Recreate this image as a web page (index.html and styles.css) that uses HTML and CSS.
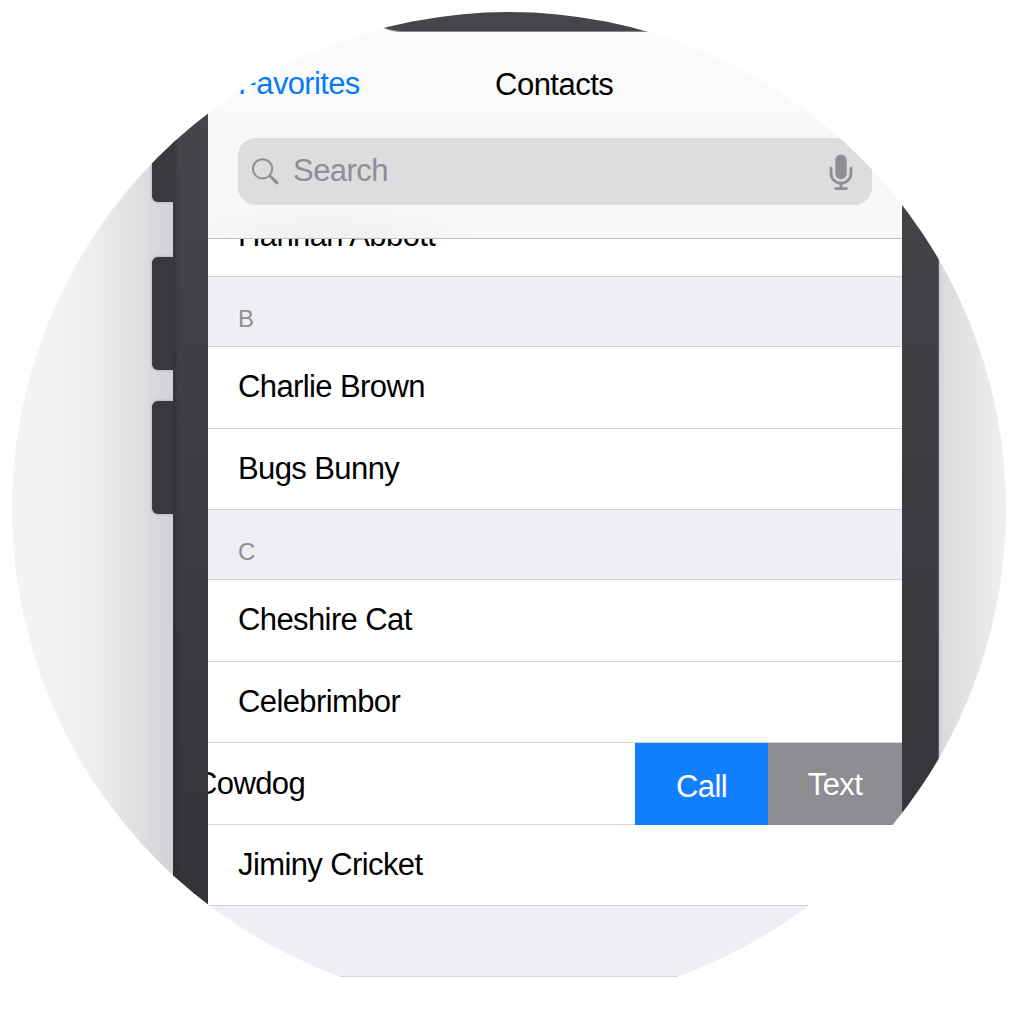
FILE: index.html
```html
<!DOCTYPE html>
<html lang="en">
<head>
<meta charset="utf-8">
<title>Contacts</title>
<link rel="stylesheet" href="styles.css">
</head>
<body>
<main class="lens">
  <aside class="side side-left">
    <div class="key key-mute"></div>
    <div class="key"></div>
    <div class="key"></div>
  </aside>
  <div class="bezel bezel-left"></div>
  <section class="screen">
    <header class="header">
      <div class="top-bezel"></div>
      <nav class="nav">
        <a class="back">Favorites</a>
        <h1 class="title">Contacts</h1>
      </nav>
      <div class="search">
        <svg class="glass" width="28" height="28" viewBox="0 0 28 28" fill="none" stroke="#8e8e93" stroke-linecap="round"><circle cx="10.6" cy="10.8" r="9.6" stroke-width="2"/><path d="M18 18l7 6.8" stroke-width="3"/></svg>
        <span class="placeholder">Search</span>
        <svg class="mic" width="24" height="37" viewBox="0 0 24 37" fill="none" stroke="#8e8e93" stroke-linecap="round"><rect x="6.3" y=".6" width="11.4" height="24.6" rx="5.7" fill="#8e8e93" stroke="none"/><path d="M2 14.2v5a10 10 0 0 0 20 0v-5M12 29.5v5" stroke-width="2.8"/><path d="M6.6 34.6h10.8" stroke-width="2.8"/></svg>
      </div>
    </header>
    <div class="list">
      <div class="row row-tucked"><span class="name">Hannah Abbott</span></div>
      <div class="group">B</div>
      <div class="row row-tall"><span class="name">Charlie Brown</span></div>
      <div class="row"><span class="name">Bugs Bunny</span></div>
      <div class="group">C</div>
      <div class="row row-tall"><span class="name">Cheshire Cat</span></div>
      <div class="row"><span class="name">Celebrimbor</span></div>
      <div class="row row-tall row-swiped">
        <span class="name">Cowdog</span>
        <div class="action call">Call</div>
        <div class="action message">Text</div>
      </div>
      <div class="row"><span class="name">Jiminy Cricket</span></div>
      <div class="group group-last"></div>
    </div>
  </section>
  <div class="bezel bezel-right"></div>
  <aside class="side side-right"></aside>
</main>
</body>
</html>
```
FILE: styles.css
```css
* { box-sizing: border-box; }
body {
  margin: 0;
  background: #fff;
  font-family: "Liberation Sans", Arial, sans-serif;
  font-size: 31px;
  color: #000;
}
.lens {
  display: grid;
  grid-template-columns: 173px 35px 694px 37px 77px;
  width: 1016px;
  height: 977px;
  overflow: hidden;
  clip-path: circle(497px at 509px 509px);
}
.side-left {
  display: flex;
  flex-direction: column;
  align-items: flex-end;
  background: linear-gradient(90deg, #f4f4f4 10px, #f1f1f1 75px, #e9eaeb 105px, #dfe1e3 135px, #d0d2d5 173px);
}
.side-right { background: linear-gradient(90deg, #cdced2 0, #dadbdd 4px, #e3e4e5 30px, #f0f0f0 68px); }
.key {
  width: 21px;
  height: 113px;
  margin-bottom: 31px;
  border-radius: 6px 0 0 6px;
  background: #39383c;
  box-shadow: 0 0 3px rgba(60, 60, 65, .35);
}
.key-mute { height: 202px; margin-bottom: 55px; }
.bezel { background: linear-gradient(#46454a 100px, #3f3e42 400px, #343338 900px); }
.bezel-left { box-shadow: inset 5px 0 4px -3px rgba(40, 39, 43, .6); }
.bezel-right { border-right: 1px solid #59585d; }
.screen { min-width: 0; background: #fff; overflow: hidden; }
.header {
  height: 239px;
  border-bottom: 1px solid #bfbfc2;
  background:
    radial-gradient(ellipse 155px 32px at 115px 236px, #f0f0f0, rgba(240, 240, 240, 0)),
    linear-gradient(#fafafa 100px, #f7f7f9 140px, #f8f8f8 238px);
}
.top-bezel {
  height: 32px;
  margin-left: 163px;
  border-bottom: 1px solid #858489;
  border-bottom-left-radius: 32px 20px;
  background: #46454a;
}
.nav {
  display: grid;
  grid-template-columns: 287px 1fr;
  height: 106px;
  align-items: start;
  line-height: 36px;
}
.back {
  padding: 34px 0 0 30px;
  color: #087bfb;
  letter-spacing: -.65px;
}
.title {
  margin: 0;
  padding-top: 35px;
  font-size: 31px;
  font-weight: 400;
  letter-spacing: -.5px;
}
.search {
  display: flex;
  align-items: flex-start;
  height: 67px;
  margin: 0 30px;
  border-radius: 18px;
  background: #dddddf;
  color: #8e8e93;
  line-height: 36px;
}
.glass { margin: 20px 0 0 14px; }
.placeholder { padding: 15px 0 0 13px; letter-spacing: -.55px; }
.mic { margin: 16px 19px 0 auto; }
.row, .group {
  height: 81px;
  border-bottom: 1px solid #d2d2d5;
}
.row { display: flex; overflow: hidden; }
.name {
  flex: 1;
  padding: 22px 0 0 30px;
  line-height: 36px;
  white-space: nowrap;
  letter-spacing: -.6px;
}
.row-tucked { height: 38px; }
.row-tucked .name { margin-top: -43px; }
.group {
  height: 70px;
  padding: 28px 0 0 30px;
  background: #efeef4;
  color: #8e8e93;
  font-size: 24px;
  line-height: 28px;
}
.group-last { height: 71px; }
.row-tall { height: 82px; }
.row-swiped { border-bottom: 0; }
.row-swiped .name {
  margin-left: -13px;
  padding: 23px 0 0;
  border-bottom: 1px solid #d2d2d5;
}
.action {
  width: 133px;
  flex: none;
  height: 82px;
  padding-top: 26px;
  color: #fff;
  line-height: 36px;
  text-align: center;
  letter-spacing: -.65px;
}
.call { background: #1080ff; }
.message { width: 134px; padding-top: 24px; background: #8e8d92; }
```
